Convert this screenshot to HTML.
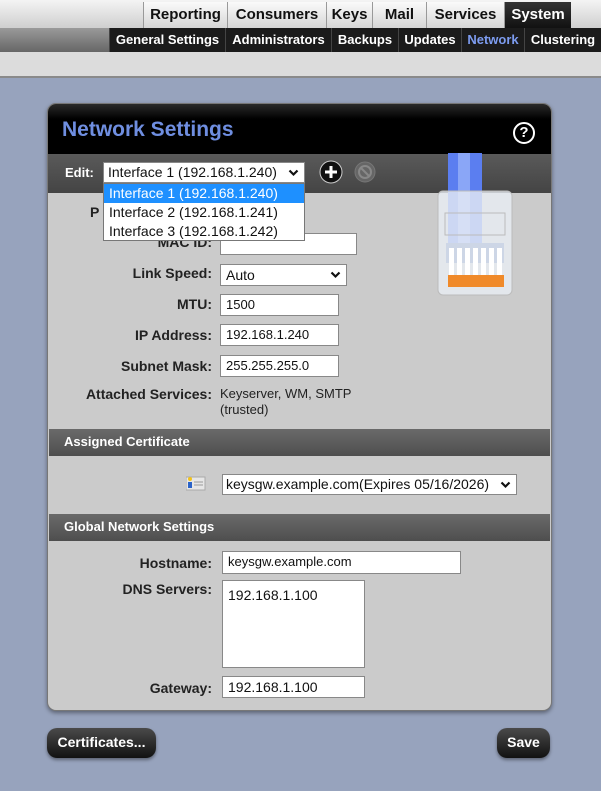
<!DOCTYPE html>
<html><head><style>
*{margin:0;padding:0;box-sizing:border-box}
body{width:601px;height:791px;background:#97a3bd;font-family:"Liberation Sans",sans-serif;position:relative;overflow:hidden}
.a{position:absolute}
.top{left:0;top:0;width:601px;height:28px;background:linear-gradient(#f4f4f4,#cfcfcf)}
.tab{position:absolute;top:2px;height:26px;font-weight:bold;font-size:15px;line-height:26px;text-align:center;color:#111;border-left:1px solid #999;background:linear-gradient(#fafafa,#d6d6d6)}
.sub{left:0;top:28px;width:601px;height:24px;background:linear-gradient(#9a9a9a,#666)}
.st{position:absolute;top:28px;height:24px;font-weight:bold;font-size:13px;line-height:24px;color:#fff;background:#1b1b1b;text-align:center;border-left:1px solid #444}
.lbl{position:absolute;right:389px;font-size:14px;font-weight:bold;color:#222;text-align:right;white-space:nowrap}
.inp{position:absolute;background:#fff;border:1px solid #888;font-size:13px;padding-left:5px;line-height:20px;color:#111}
.sec{position:absolute;left:49px;width:501px;height:27px;background:linear-gradient(#6a6a6a,#4e4e4e);color:#fff;font-weight:bold;font-size:13px;line-height:26px;padding-left:15px}
.btn{position:absolute;height:30px;border-radius:10px;background:linear-gradient(#4a4a4a,#111);color:#fff;font-weight:bold;font-size:14px;line-height:29px;text-align:center;box-shadow:0 2px 3px rgba(0,0,0,.4)}
.chev{position:absolute;right:5px;top:50%;margin-top:-4px}
</style></head><body>
<div class="a top"></div>
<div class="tab" style="left:143px;width:84px">Reporting</div>
<div class="tab" style="left:227px;width:99px">Consumers</div>
<div class="tab" style="left:326px;width:46px">Keys</div>
<div class="tab" style="left:372px;width:54px">Mail</div>
<div class="tab" style="left:426px;width:78px">Services</div>
<div class="tab" style="left:504px;width:67px;background:linear-gradient(#333,#111);color:#fff">System</div>
<div class="a sub"></div>
<div class="st" style="left:109px;width:116px">General Settings</div>
<div class="st" style="left:225px;width:106px">Administrators</div>
<div class="st" style="left:331px;width:67px">Backups</div>
<div class="st" style="left:398px;width:63px">Updates</div>
<div class="st" style="left:461px;width:63px;color:#7d9cf0">Network</div>
<div class="st" style="left:524px;width:77px">Clustering</div>
<div class="a" style="left:0;top:52px;width:601px;height:26px;background:#dcdcdc;border-bottom:2px solid #8a8a8a"></div>

<div class="a" style="left:47px;top:103px;width:505px;height:608px;border-radius:9px;background:#cbcbcb;border:1px solid #777;box-shadow:0 2px 4px rgba(0,0,0,.4);overflow:hidden">
 <div class="a" style="left:0;top:0;width:503px;height:50px;background:linear-gradient(#2a2a2a,#000 30%);"></div>
 <div class="a" style="left:14px;top:14px;font-size:21px;font-weight:bold;color:#6f8ee0">Network Settings</div>
 <div class="a" style="left:465px;top:18px;width:22px;height:22px;border-radius:50%;border:2px solid #fff;color:#fff;font-weight:bold;font-size:15px;text-align:center;line-height:18px">?</div>
 <div class="a" style="left:0;top:50px;width:503px;height:39px;background:linear-gradient(#5a5a5a,#444)"></div>
</div>
<div class="a" style="left:65px;top:165px;font-size:13px;font-weight:bold;color:#fff">Edit:</div>
<div class="inp" style="left:103px;top:162px;width:202px;height:21px;font-size:14px;padding-left:4px;line-height:19px">Interface 1 (192.168.1.240)<svg class="chev" width="11" height="8"><path d="M1.5 1.5l4 4 4-4" fill="none" stroke="#111" stroke-width="2.2"/></svg></div>
<svg class="a" style="left:319px;top:160px" width="60" height="26"><circle cx="12" cy="12" r="11" fill="#111" stroke="#ccc" stroke-width="1"/><path d="M12 6v12M6 12h12" stroke="#fff" stroke-width="3"/><circle cx="46" cy="12" r="10" fill="#666" stroke="#777"/><circle cx="46" cy="12" r="6" fill="none" stroke="#888" stroke-width="2"/><path d="M42 8l8 8" stroke="#888" stroke-width="2"/></svg>
<svg class="a" style="left:436px;top:153px" width="80" height="145">
<rect x="12" y="0" width="34" height="95" fill="#5b7ef0"/><rect x="22" y="0" width="12" height="95" fill="#8aa6f7"/>
<rect x="2" y="38" width="74" height="104" rx="5" fill="#e8eef4" fill-opacity=".8" stroke="#bbb"/>
<rect x="9" y="60" width="60" height="22" fill="none" stroke="#bbb"/>
<rect x="10" y="90" width="58" height="20" fill="#cdd6e6"/>
<g fill="#fff"><rect x="13" y="95" width="5" height="38"/><rect x="21" y="95" width="5" height="38"/><rect x="29" y="95" width="5" height="38"/><rect x="37" y="95" width="5" height="38"/><rect x="45" y="95" width="5" height="38"/><rect x="53" y="95" width="5" height="38"/><rect x="61" y="95" width="5" height="38"/></g>
<rect x="12" y="122" width="56" height="12" fill="#f08a2a"/>
</svg>
<div class="a" style="left:90px;top:204px;font-size:14px;font-weight:bold;color:#222">P</div>
<div class="lbl" style="top:234px">MAC ID:</div><div class="inp" style="left:220px;top:233px;width:137px;height:22px"></div>
<div class="lbl" style="top:265px">Link Speed:</div><div class="inp" style="left:220px;top:264px;width:127px;height:22px;font-size:14px">Auto<svg class="chev" width="11" height="8"><path d="M1.5 1.5l4 4 4-4" fill="none" stroke="#111" stroke-width="2.2"/></svg></div>
<div class="lbl" style="top:296px">MTU:</div><div class="inp" style="left:220px;top:294px;width:119px;height:22px">1500</div>
<div class="lbl" style="top:327px">IP Address:</div><div class="inp" style="left:220px;top:324px;width:119px;height:22px">192.168.1.240</div>
<div class="lbl" style="top:358px">Subnet Mask:</div><div class="inp" style="left:220px;top:355px;width:119px;height:22px">255.255.255.0</div>
<div class="lbl" style="top:386px">Attached Services:</div>
<div class="a" style="left:220px;top:386px;font-size:13px;color:#222;line-height:16px">Keyserver, WM, SMTP<br>(trusted)</div>
<div class="a" style="left:103px;top:183px;width:202px;height:58px;background:#fff;border:1px solid #777;font-size:14px;line-height:19px;color:#111">
<div style="background:#1e90ff;color:#fff;padding-left:5px">Interface 1 (192.168.1.240)</div>
<div style="padding-left:5px">Interface 2 (192.168.1.241)</div>
<div style="padding-left:5px">Interface 3 (192.168.1.242)</div></div>
<div class="sec" style="top:429px">Assigned Certificate</div>
<svg class="a" style="left:186px;top:476px" width="20" height="15"><rect x="0" y="1" width="19" height="13" fill="#e6e6e6" stroke="#aaa"/><rect x="2" y="6" width="4" height="6" fill="#2b63c8"/><circle cx="4" cy="3" r="2" fill="#f2c21b"/><path d="M8 6h9M8 9h9" stroke="#999"/></svg>
<div class="inp" style="left:222px;top:474px;width:295px;height:21px;font-size:14px;padding-left:3px;line-height:19px">keysgw.example.com(Expires 05/16/2026)<svg class="chev" width="11" height="8"><path d="M1.5 1.5l4 4 4-4" fill="none" stroke="#111" stroke-width="2.2"/></svg></div>
<div class="sec" style="top:514px">Global Network Settings</div>
<div class="lbl" style="top:555px">Hostname:</div><div class="inp" style="left:222px;top:551px;width:239px;height:23px">keysgw.example.com</div>
<div class="lbl" style="top:581px">DNS Servers:</div><div class="inp" style="left:222px;top:580px;width:143px;height:88px;padding-top:4px;font-size:14px">192.168.1.100</div>
<div class="lbl" style="top:680px">Gateway:</div><div class="inp" style="left:222px;top:676px;width:143px;height:22px;font-size:14px">192.168.1.100</div>
<div class="btn" style="left:47px;top:728px;width:109px">Certificates...</div>
<div class="btn" style="left:497px;top:728px;width:53px">Save</div>
</body></html>
